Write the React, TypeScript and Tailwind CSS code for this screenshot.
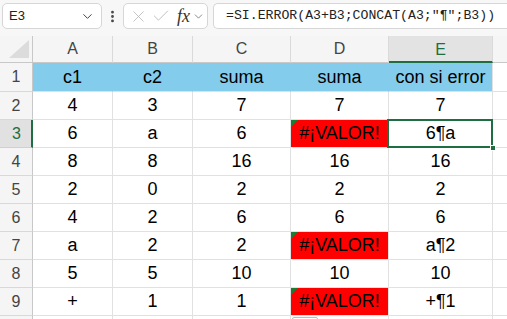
import { X, Check, ChevronDown, EllipsisVertical } from "lucide-react";

const cols = [
  { key: "A", w: "w-[80px]" },
  { key: "B", w: "w-[80px]" },
  { key: "C", w: "w-[98px]" },
  { key: "D", w: "w-[98px]" },
  { key: "E", w: "w-[104px]" },
];

const data: string[][] = [
  ["c1", "c2", "suma", "suma", "con si error"],
  ["4", "3", "7", "7", "7"],
  ["6", "a", "6", "#¡VALOR!", "6¶a"],
  ["8", "8", "16", "16", "16"],
  ["2", "0", "2", "2", "2"],
  ["4", "2", "6", "6", "6"],
  ["a", "2", "2", "#¡VALOR!", "a¶2"],
  ["5", "5", "10", "10", "10"],
  ["+", "1", "1", "#¡VALOR!", "+¶1"],
];

const ErrorCell = ({ text }: { text: string }) => (
  <div className="relative flex h-full w-full items-center justify-center bg-[#ff0000]">
    <svg className="absolute left-0 top-0" width="7" height="7" viewBox="0 0 7 7">
      <polygon points="0,0 7,0 0,7" fill="#1e7b34" />
    </svg>
    <span className="text-black">{text}</span>
  </div>
);

const App = () => {
  return (
    <div className="h-[319px] w-[507px] overflow-hidden bg-white font-['Liberation_Sans',Arial,sans-serif] text-black">
      {/* formula bar */}
      <div className="flex h-[36px] items-start bg-[#f7f7f7] pt-[3px]">
        <div className="ml-[2px] flex h-[26px] w-[100px] items-center justify-between rounded-[5px] border border-[#d6d6d6] bg-white pl-[6px] pr-[6px] text-[13px] text-[#222]">
          E3
          <ChevronDown size={15} strokeWidth={1.6} className="text-[#444]" />
        </div>
        <div className="flex h-[26px] w-[21px] items-center justify-center text-[#444]">
          <EllipsisVertical size={15} strokeWidth={2.5} />
        </div>
        <div className="flex h-[26px] w-[85px] items-center rounded-[5px] border border-[#d6d6d6] bg-white pl-[5px]">
          <X size={19} strokeWidth={1} className="text-[#b4b4b4]" />
          <Check size={20} strokeWidth={1} className="ml-[3px] text-[#b4b4b4]" />
          <span className="ml-[6px] font-['Liberation_Serif',serif] text-[18px] italic leading-none text-[#333]">
            fx
          </span>
          <ChevronDown size={13} strokeWidth={1.4} className="ml-[2px] text-[#666]" />
        </div>
        <div className="ml-[5px] flex h-[26px] flex-1 items-center whitespace-nowrap rounded-l-[5px] border border-r-0 border-[#d6d6d6] bg-white pl-[12px] font-['Liberation_Mono',monospace] text-[13.2px] text-[#222]">
          =SI.ERROR(A3+B3;CONCAT(A3;"¶";B3))
        </div>
      </div>

      {/* column headers */}
      <div className="flex h-[27px] bg-[#f5f5f5] text-[16px] text-[#444]">
        <div className="relative w-[33px] border-b border-r border-[#c8c8c8]">
          <svg className="absolute bottom-[4px] right-[3px]" width="20" height="18" viewBox="0 0 20 18">
            <polygon points="20,0 20,18 0,18" fill="#dcdcdc" />
          </svg>
        </div>
        {cols.map((c) =>
          c.key === "E" ? (
            <div
              key={c.key}
              className={`${c.w} flex items-center justify-center border-b-2 border-r border-b-[#1e6e42] border-r-[#dadada] bg-[#e3e3e3] pt-[2px] text-[#1e6e42]`}
            >
              {c.key}
            </div>
          ) : (
            <div
              key={c.key}
              className={`${c.w} flex items-center justify-center border-b border-r border-b-[#c8c8c8] border-r-[#dadada]`}
            >
              {c.key}
            </div>
          )
        )}
        <div className="flex-1 border-b border-[#c8c8c8]" />
      </div>

      {/* rows */}
      {data.map((row, r) => {
        const isHead = r === 0;
        const sel = r === 2;
        return (
          <div key={r} className={`flex text-[18px] ${isHead ? "h-[29px]" : "h-[28px]"}`}>
            <div
              className={
                sel
                  ? "flex w-[33px] items-center justify-center border-b border-r-2 border-b-[#d0d0d0] border-r-[#1e6e42] bg-[#e1e1e1] pl-[2px] text-[16px] text-[#1e6e42]"
                  : "flex w-[33px] items-center justify-center border-b border-r border-b-[#d8d8d8] border-r-[#c8c8c8] bg-[#f5f5f5] text-[16px] text-[#444]"
              }
            >
              {r + 1}
            </div>
            {row.map((v, ci) => {
              const w = cols[ci].w;
              if (isHead) {
                return (
                  <div
                    key={ci}
                    className={`${w} flex items-center justify-center border-b border-r border-b-[#e1e1e1] bg-[#83ccec] ${
                      ci === 4 ? "border-r-[#e1e1e1]" : "border-r-[#83ccec]"
                    }`}
                  >
                    {v}
                  </div>
                );
              }
              if (v === "#¡VALOR!") {
                return (
                  <div key={ci} className={`${w} border-b border-r border-[#e1e1e1]`}>
                    <ErrorCell text={v} />
                  </div>
                );
              }
              if (sel && ci === 4) {
                return (
                  <div
                    key={ci}
                    className={`${w} relative flex items-center justify-center border-b border-r border-[#e1e1e1]`}
                  >
                    <div className="absolute bottom-[-1px] left-[-2px] right-[-1px] top-[-1px] border-2 border-[#1e6e42]" />
                    <div className="absolute bottom-[-4px] right-[-4px] h-[6px] w-[6px] border border-white bg-[#1e6e42]" />
                    {v}
                  </div>
                );
              }
              return (
                <div
                  key={ci}
                  className={`${w} flex items-center justify-center border-b border-r border-[#e1e1e1]`}
                >
                  {v}
                </div>
              );
            })}
            <div className="flex-1 border-b border-[#e1e1e1]" />
          </div>
        );
      })}

      {/* row 10, cut off */}
      <div className="flex h-[28px]">
        <div className="w-[33px] border-r border-[#c8c8c8] bg-[#f5f5f5]" />
        <div className="w-[80px] border-r border-[#e1e1e1]" />
        <div className="w-[80px] border-r border-[#e1e1e1]" />
        <div className="w-[98px] border-r border-[#e1e1e1]" />
        <div className="relative w-[98px] border-r border-[#e1e1e1]">
          <div className="absolute left-[1px] top-[1px] h-[20px] w-[26px] rounded-[2px] border border-[#bdbdbd] bg-white" />
        </div>
        <div className="w-[104px] border-r border-[#e1e1e1]" />
        <div className="flex-1" />
      </div>
    </div>
  );
};

export default App;
